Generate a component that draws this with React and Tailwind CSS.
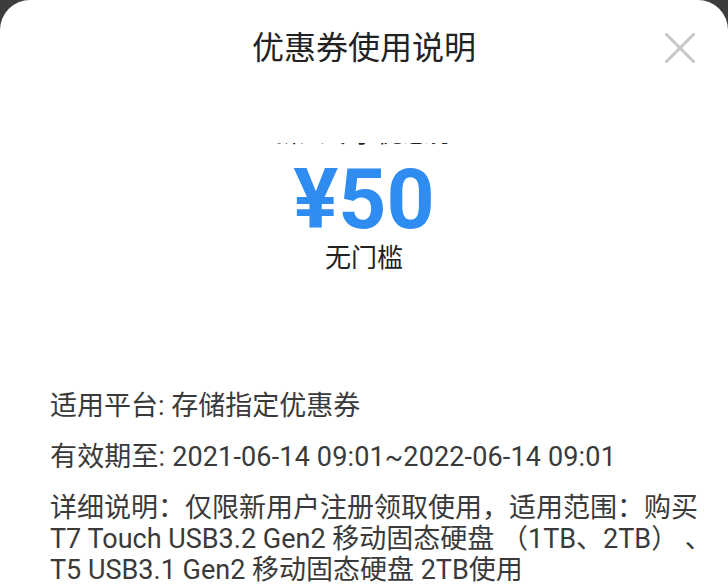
const font = { fontFamily: 'Roboto, "Noto Sans CJK SC", sans-serif' };

export default function App() {
    return (
        <div className="h-[586px] w-[728px] overflow-hidden bg-[#3d3d3d]" style={font}>
            <div className="h-full bg-white rounded-t-[30px]">
                {/* Header */}
                <div className="relative h-[93px] flex items-center justify-center">
                    <h1 className="text-[32px] text-[#222] leading-none mt-[2px]">优惠券使用说明</h1>
                    <button className="absolute right-[33px] top-[33px]">
                        <svg width="30" height="30" viewBox="0 0 30 30" fill="none" stroke="#c6c6c6" strokeWidth="3" strokeLinecap="round">
                            <path d="M1.5 1.5 28.5 28.5M28.5 1.5 1.5 28.5" />
                        </svg>
                    </button>
                </div>

                {/* Coupon, scrolled so its first line is clipped */}
                <div className="h-[50px]" />
                <div className="h-[5px] overflow-hidden flex justify-center">
                    <div className="text-[26px] leading-none text-[#222] mt-[-23px] whitespace-nowrap">新人专享优惠券</div>
                </div>
                <div className="flex flex-col items-center">
                    <div className="text-[84px] font-bold leading-[72px] text-[#2f8cf0] mt-[16px]">¥50</div>
                    <div className="text-[26px] leading-none text-[#222] mt-[9px]">无门槛</div>
                </div>

                {/* Details */}
                <div className="mt-[120px] pl-[50px] text-[27px] text-[#3a3a3a] leading-[31px] flex flex-col gap-[20px] whitespace-nowrap">
                    <p>适用平台: 存储指定优惠券</p>
                    <p className="tracking-[0.15px]">有效期至: 2021-06-14 09:01~2022-06-14 09:01</p>
                    <p>
                        <span className="block">详细说明：仅限新用户注册领取使用，适用范围：购买</span>
                        <span className="block">
                            T7 Touch USB3.2 Gen2 移动固态硬盘 （1TB、2TB）<span className="ml-[20px]">、</span>
                        </span>
                        <span className="block">T5 USB3.1 Gen2 移动固态硬盘 2TB使用</span>
                    </p>
                </div>
            </div>
        </div>
    );
}
